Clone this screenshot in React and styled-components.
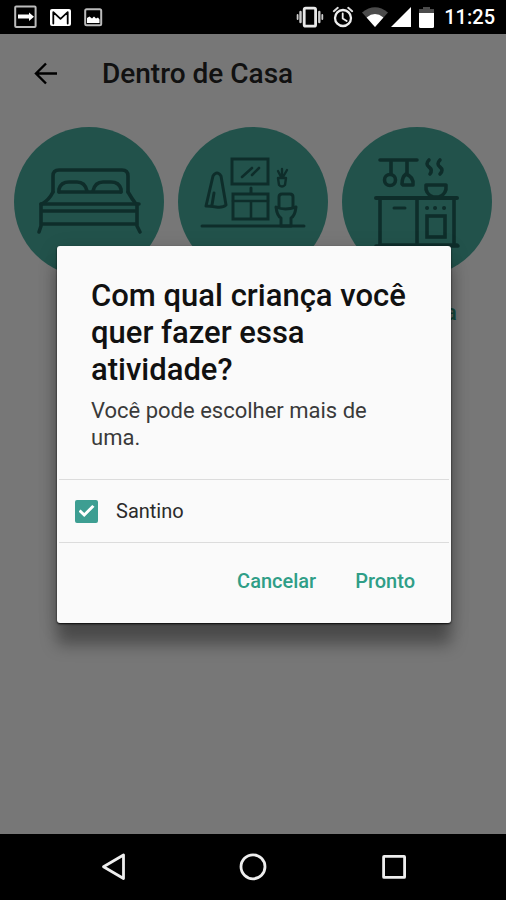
import React, { useState } from "react";
import styled, { createGlobalStyle } from "styled-components";

const GlobalStyle = createGlobalStyle`
  *, *::before, *::after { box-sizing: border-box; }
  body {
    margin: 0;
    background: #000;
    font-family: Roboto, "Noto Sans", sans-serif;
  }
  button { font: inherit; }
`;

const Screen = styled.div`
  min-height: 100vh;
  display: flex;
  flex-direction: column;
`;

const StatusBar = styled.header`
  height: 34px;
  padding: 0 11px 0 14px;
  display: flex;
  align-items: center;
  justify-content: space-between;
  background: #000;
  color: #fff;
`;

const StatusGroup = styled.div`
  display: flex;
  align-items: center;
  gap: ${({ $gap }) => $gap}px;
`;

const Clock = styled.time`
  margin-left: 2px;
  font-size: 20px;
  line-height: 24px;
  font-weight: 500;
`;

const Stage = styled.main`
  position: relative;
  flex: 1;
  display: flex;
  flex-direction: column;
  background: #fefefe;
`;

const AppBar = styled.div`
  height: 80px;
  padding: 0 32px;
  display: flex;
  align-items: center;
  gap: 42px;
`;

const IconButton = styled.button`
  display: flex;
  padding: 0;
  border: 0;
  background: none;
  color: inherit;
  cursor: pointer;
`;

const PageTitle = styled.h1`
  margin: 0;
  font-size: 28px;
  line-height: 32px;
  font-weight: 500;
  color: #262626;
`;

const RoomGrid = styled.nav`
  display: grid;
  grid-template-columns: repeat(3, 1fr);
  gap: 14px;
  padding: 13px 14px;
`;

const RoomLink = styled.a`
  display: flex;
  flex-direction: column;
  gap: 24px;
  color: #2f9e87;
  font-size: 22px;
  line-height: 24px;
  font-weight: 500;
  text-align: center;
  text-decoration: none;
`;

const RoomCircle = styled.span`
  display: block;
  aspect-ratio: 1;
  border-radius: 50%;
  background: #49b0a2;
  color: #1f625b;

  svg {
    display: block;
    width: 100%;
    height: 100%;
  }
`;

const Scrim = styled.div`
  position: absolute;
  inset: 0;
  display: flex;
  align-items: center;
  justify-content: center;
  padding: 1px 55px 0 57px;
  background: rgba(0, 0, 0, 0.535);
`;

const Dialog = styled.form`
  width: 100%;
  max-width: 560px;
  border-radius: 3px;
  background: #fafafa;
  box-shadow:
    0 1px 2px rgba(0, 0, 0, 0.9),
    0 22px 16px rgba(0, 0, 0, 0.34),
    0 4px 20px rgba(0, 0, 0, 0.15);
`;

const DialogIntro = styled.div`
  padding: 31px 34px 28px;
`;

const DialogTitle = styled.h2`
  margin: 0 0 9px;
  font-size: 31px;
  line-height: 37px;
  font-weight: 500;
  color: #111;
`;

const DialogText = styled.p`
  margin: 0;
  font-size: 22px;
  line-height: 27px;
  color: #3a3a3a;
`;

const ChildList = styled.div`
  margin: 0 2px;
  border: solid #dcdcdc;
  border-width: 1px 0;
`;

const ChildRow = styled.label`
  height: 62px;
  padding: 0 16px;
  display: flex;
  align-items: center;
  gap: 18px;
  font-size: 20px;
  line-height: 24px;
  color: #2b2b2b;
  cursor: pointer;
`;

const Checkbox = styled.input`
  appearance: none;
  width: 23px;
  height: 23px;
  margin: 0;
  border: 2px solid #3d9e92;
  border-radius: 2px;
  display: grid;
  place-items: center;

  &:checked { background: #3d9e92; }

  &:checked::before {
    content: "";
    width: 16px;
    height: 12px;
    background: #fff;
    clip-path: polygon(0 55%, 13% 38%, 36% 66%, 86% 0, 100% 15%, 36% 100%);
  }
`;

const Actions = styled.div`
  height: 80px;
  padding: 0 36px 4px;
  display: flex;
  align-items: center;
  justify-content: flex-end;
  gap: 39px;
`;

const TextButton = styled.button`
  padding: 0;
  border: 0;
  background: none;
  font-size: 20px;
  line-height: 24px;
  font-weight: 500;
  color: #2f9e87;
  cursor: pointer;
`;

const NavBar = styled.footer`
  height: 66px;
  padding: 0 98px;
  display: flex;
  align-items: center;
  justify-content: space-between;
  background: #000;
  color: #eee;
`;

const Line = ({ w, h, box, stroke = 2, children, ...rest }) => (
  <svg
    width={w}
    height={h}
    viewBox={box || `0 0 ${w} ${h}`}
    fill="none"
    stroke="currentColor"
    strokeWidth={stroke}
    strokeLinecap="round"
    strokeLinejoin="round"
    aria-hidden="true"
    {...rest}
  >
    {children}
  </svg>
);

const ShareIcon = () => (
  <Line w={23} h={24}>
    <rect x="1.2" y="1.6" width="20.4" height="20.4" rx="1" stroke="#bbb" />
    <path d="M4 9.6h11V7.4l5 4.3-5 4.3v-2.4H4z" fill="#fff" stroke="none" />
  </Line>
);

const MailIcon = () => (
  <Line w={21} h={24}>
    <rect x="0" y="4" width="21" height="17" rx="2" fill="#fff" stroke="none" />
    <path d="M3.3 18.5V7.2l7.2 6.6 7.2-6.6v11.3" stroke="#000" strokeWidth="1.8" />
  </Line>
);

const ImageIcon = () => (
  <Line w={19} h={24}>
    <rect x="1.2" y="4.2" width="16" height="16" rx="1.5" stroke="#bbb" />
    <path d="M3 18v-5l2.5-1.5 2.5 2 2-2 2 2 2-1 1.5 2V18z" fill="#fff" stroke="none" />
  </Line>
);

const VibrateIcon = () => (
  <Line w={28} h={24}>
    <rect x="8.2" y="3.2" width="11.4" height="18" rx="1.5" stroke="#e8e8e8" strokeWidth="2.8" />
    <path d="M4.5 7v10M23.3 7v10" stroke="#ccc" strokeWidth="2.4" />
    <path d="M1.6 10v4M26.3 10v4" stroke="#ccc" strokeWidth="1.8" />
  </Line>
);

const AlarmIcon = () => (
  <Line w={22} h={24}>
    <circle cx="11" cy="13" r="8" stroke="#eee" strokeWidth="2.3" />
    <path d="M1.8 6.2l4-3.4M20.2 6.2l-4-3.4" stroke="#ddd" strokeWidth="2" />
    <path d="M10.7 8.5v5l4 2.6" stroke="#eee" strokeWidth="1.8" />
  </Line>
);

const WifiIcon = () => (
  <Line w={26} h={24} stroke={0}>
    <path d="M0 7.5Q13-3 26 7.5L13 22z" fill="#4b4b4b" stroke="none" />
    <path d="M4.6 12.4Q13 5.5 21.4 12.4L13 22z" fill="#fff" stroke="none" />
  </Line>
);

const SignalIcon = () => (
  <Line w={20} h={24}>
    <path d="M20 2v20H0z" fill="#fff" stroke="none" />
  </Line>
);

const BatteryIcon = () => (
  <Line w={15} h={24}>
    <path d="M0 4h4V2h7v2h4v5H0z" fill="#4b4b4b" stroke="none" />
    <path d="M0 8h15v13.5a1.5 1.5 0 0 1-1.5 1.5h-12A1.5 1.5 0 0 1 0 21.5z" fill="#fff" stroke="none" />
  </Line>
);

const BackArrow = () => (
  <Line w={28} h={24} stroke={2.4} strokeLinecap="butt" strokeLinejoin="miter">
    <path d="M25 11.5H4M14 1.5l-10 10 10 10" />
  </Line>
);

const BedIcon = () => (
  <Line w={150} h={150} stroke={3.6}>
    <path d="M39 65V49q0-6 6-6h63q6 0 6 6v16" />
    <path d="M45 65v-3q2-7 10-7h8q8 0 10 9M79 64q2-9 10-9h8q8 0 10 7v3" />
    <path d="M45 65h62M39 65q-4 8-11 12M114 65q4 7 8 12" />
    <path d="M27 77h98M28 84h94M28 97h94" />
    <path d="M27 77v22l-2 6M123 77v22l3 6" />
  </Line>
);

const BathroomIcon = () => (
  <Line w={150} h={150} stroke={3}>
    <rect x="54" y="32" width="36" height="25" strokeLinejoin="miter" />
    <path d="M64 50l10-9M74 48l7-7" strokeWidth="2.6" />
    <path d="M28 79l7-30q4-6 8 0l5 29q-3 3-10 2t-10-1M36 66l-2 12" />
    <path d="M73 61v5" />
    <rect x="55" y="67" width="35" height="25" strokeLinejoin="miter" />
    <path d="M55 74h35M73 74v17" strokeWidth="2.6" />
    <path d="M100 51l1 7q3 3 6 0l1-7h-8zM103 50l-3-6M104 50v-8M105 50l4-7" strokeWidth="2.4" />
    <path d="M101 80V70q0-3 3-3h8q3 0 3 3v10" />
    <path d="M98 80q9 4 20 0-1 9-5 11v8h-10v-8q-4-2-5-11z" />
    <path d="M24 99h102" />
  </Line>
);

const KitchenIcon = () => (
  <Line w={150} h={150} stroke={3.6}>
    <path d="M38 33h37M49 34v13M65 34v12" />
    <ellipse cx="48" cy="53" rx="5.5" ry="5.5" />
    <path d="M60 57q0-7 4-10 8 3 7 11h-10z" />
    <path d="M87 33q-4 4 0 7t1 7M98 33q-4 4 0 7t0 7" />
    <path d="M84 58h20q1 9-7 12h-6q-8-3-7-12z" />
    <path d="M34 71h81" strokeWidth="4" />
    <path d="M38 72v46M75 72v46M112 72v46M34 119h20M106 119h10" />
    <path d="M52 81h11" strokeWidth="3" />
    <path d="M85 81h.1M93 81h.1M102 81h.1" strokeWidth="4" />
    <rect x="85" y="89" width="18" height="21" strokeLinejoin="miter" />
    <path d="M38 118h77" />
  </Line>
);

const NavBack = () => (
  <Line w={28} h={30} stroke={2.8}>
    <path d="M25.5 3v23.5L5.5 14.8z" />
  </Line>
);

const NavHome = () => (
  <Line w={28} h={30} stroke={2.8}>
    <circle cx="14" cy="14.8" r="12" />
  </Line>
);

const NavRecents = () => (
  <Line w={28} h={30} stroke={2.8}>
    <rect x="3.6" y="4.4" width="21" height="21" rx="0.5" />
  </Line>
);

const rooms = [
  { name: "Quarto", href: "#quarto", Icon: BedIcon },
  { name: "Banheiro", href: "#banheiro", Icon: BathroomIcon },
  { name: "Cozinha", href: "#cozinha", Icon: KitchenIcon, captioned: true },
];

export default function App() {
  const [selected, setSelected] = useState(true);

  return (
    <>
      <GlobalStyle />
      <Screen>
        <StatusBar>
          <StatusGroup $gap={13}>
            <ShareIcon />
            <MailIcon />
            <ImageIcon />
          </StatusGroup>
          <StatusGroup $gap={8}>
            <VibrateIcon />
            <AlarmIcon />
            <StatusGroup $gap={3}>
              <WifiIcon />
              <SignalIcon />
            </StatusGroup>
            <BatteryIcon />
            <Clock>11:25</Clock>
          </StatusGroup>
        </StatusBar>

        <Stage>
          <AppBar>
            <IconButton type="button" aria-label="Voltar">
              <BackArrow />
            </IconButton>
            <PageTitle>Dentro de Casa</PageTitle>
          </AppBar>
          <RoomGrid>
            {rooms.map(({ name, href, Icon, captioned }) => (
              <RoomLink key={name} href={href} aria-label={name}>
                <RoomCircle>
                  <Icon />
                </RoomCircle>
                {captioned && name}
              </RoomLink>
            ))}
          </RoomGrid>

          <Scrim>
            <Dialog
              role="dialog"
              aria-modal="true"
              aria-labelledby="dialog-title"
              onSubmit={(event) => event.preventDefault()}
            >
              <DialogIntro>
                <DialogTitle id="dialog-title">
                  Com qual criança você quer fazer essa atividade?
                </DialogTitle>
                <DialogText>Você pode escolher mais de uma.</DialogText>
              </DialogIntro>
              <ChildList>
                <ChildRow htmlFor="child-santino">
                  <Checkbox
                    id="child-santino"
                    type="checkbox"
                    checked={selected}
                    onChange={(event) => setSelected(event.target.checked)}
                  />
                  Santino
                </ChildRow>
              </ChildList>
              <Actions>
                <TextButton type="button">Cancelar</TextButton>
                <TextButton type="submit">Pronto</TextButton>
              </Actions>
            </Dialog>
          </Scrim>
        </Stage>

        <NavBar>
          <IconButton type="button" aria-label="Voltar">
            <NavBack />
          </IconButton>
          <IconButton type="button" aria-label="Início">
            <NavHome />
          </IconButton>
          <IconButton type="button" aria-label="Recentes">
            <NavRecents />
          </IconButton>
        </NavBar>
      </Screen>
    </>
  );
}
